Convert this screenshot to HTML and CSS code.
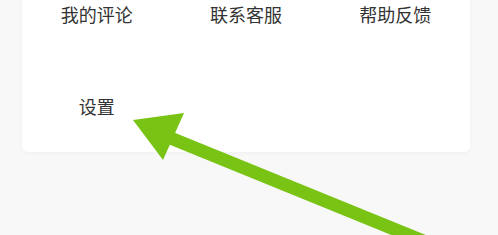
FILE: index.html
```html
<!DOCTYPE html>
<html lang="zh-CN">
<head>
    <meta charset="UTF-8">
    <meta name="viewport" content="width=device-width, initial-scale=1.0">
    <title>我的</title>
    <link rel="stylesheet" href="styles.css">
</head>
<body>
    <div class="card">
        <div class="grid">
            <div class="item">我的评论</div>
            <div class="item">联系客服</div>
            <div class="item">帮助反馈</div>
            <div class="item">设置</div>
        </div>
    </div>
    <svg class="arrow" width="498" height="235" viewBox="0 0 498 235">
        <line x1="168" y1="137" x2="465" y2="258" stroke="#78c314" stroke-width="13"/>
        <polygon points="133,120 184,113 163,160" fill="#78c314"/>
    </svg>
</body>
</html>
```

FILE: styles.css
```css
body {
    margin: 0;
    height: 235px;
    overflow: hidden;
    background-color: #f8f8f8;
    font-family: "Noto Sans CJK SC", "Noto Sans", sans-serif;
    position: relative;
}
.card {
    margin: -32px 0 0 22px;
    width: 448px;
    background-color: #fff;
    border-radius: 6px;
    box-shadow: 0 1px 4px rgba(0, 0, 0, 0.04);
}
.grid {
    display: grid;
    grid-template-columns: repeat(3, 1fr);
    grid-auto-rows: 92px;
}
.item {
    display: flex;
    justify-content: center;
    align-items: center;
    font-size: 18px;
    color: #333;
}
.arrow {
    position: absolute;
    top: 0;
    left: 0;
}
```
